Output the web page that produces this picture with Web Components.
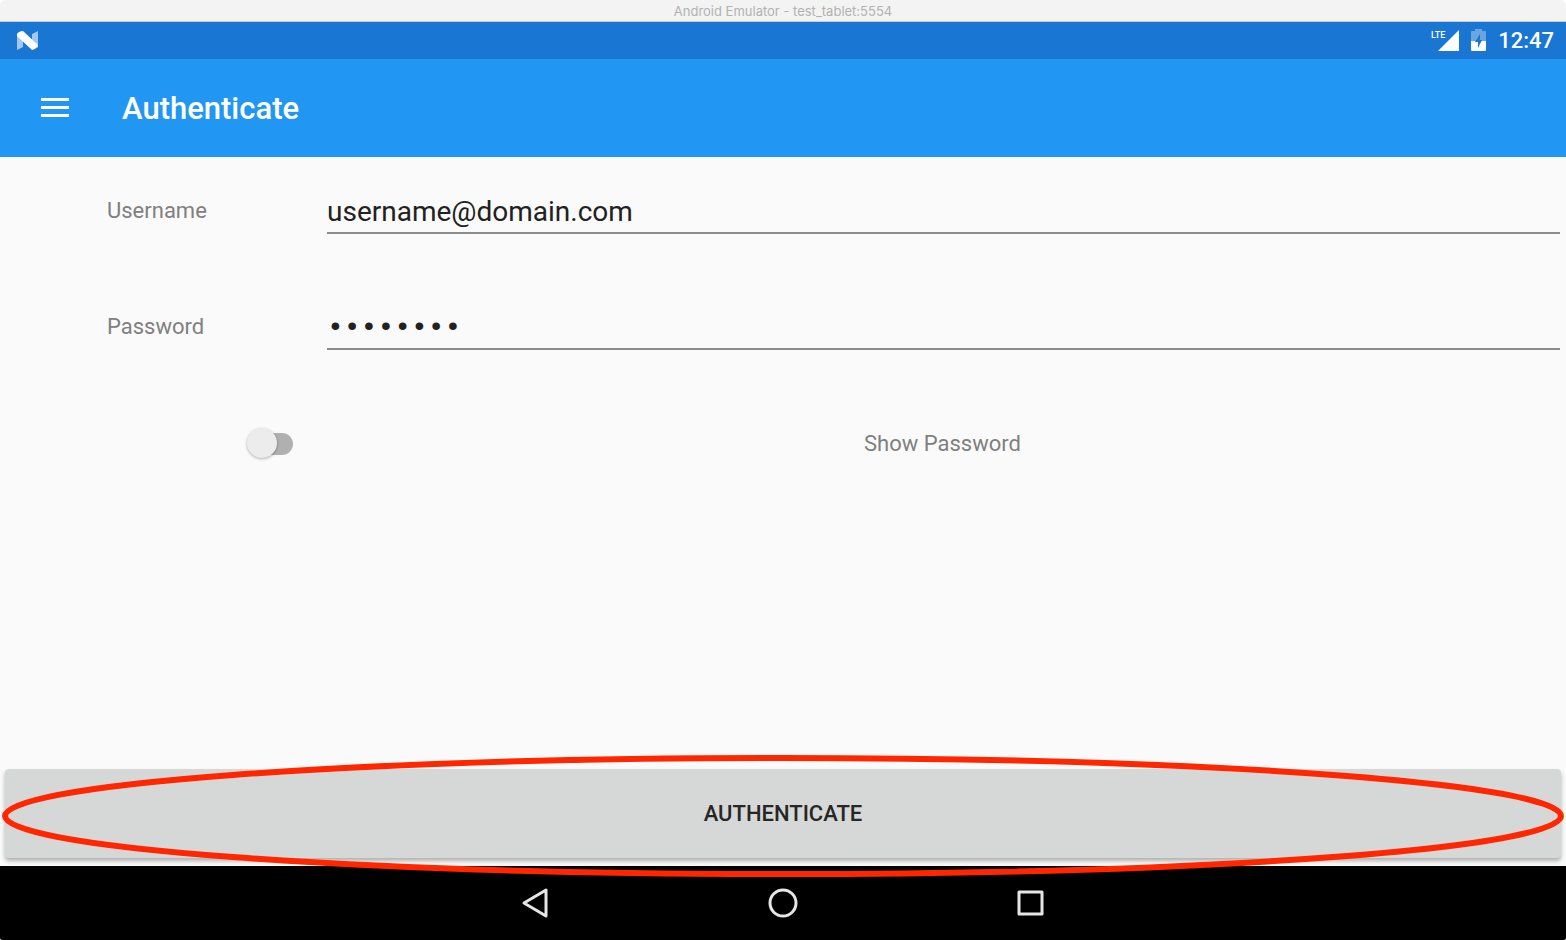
<!DOCTYPE html>
<html lang="en">
<head>
<meta charset="utf-8">
<title>Android Emulator - test_tablet:5554</title>
<style>
html, body { margin: 0; background: #fff; }
body { font-family: Roboto, sans-serif; }
</style>
</head>
<body>
<emulator-window>
  <window-title slot="chrome">Android Emulator - test_tablet:5554</window-title>
  <status-bar slot="chrome">12:47</status-bar>
  <app-toolbar slot="chrome">Authenticate</app-toolbar>
  <text-field label="Username" type="text" value="username@domain.com"></text-field>
  <text-field label="Password" type="password" value="password"></text-field>
  <switch-row>Show Password</switch-row>
  <action-button slot="action">AUTHENTICATE</action-button>
  <system-nav slot="nav"></system-nav>
</emulator-window>

<script>
function define(name, html, setup) {
  const template = document.createElement('template');
  template.innerHTML = html;
  customElements.define(name, class extends HTMLElement {
    constructor() {
      super();
      this.attachShadow({ mode: 'open' }).append(template.content.cloneNode(true));
    }
    connectedCallback() {
      if (setup) setup(this, this.shadowRoot);
    }
  });
}

define('emulator-window', `
<style>
:host { display: flex; flex-direction: column; min-height: 100vh; border-radius: 6px 6px 2px 2px; overflow: hidden; background: #fafafa; }
main { flex: 1; display: flex; flex-direction: column; gap: 8px; }
</style>
<slot name="chrome"></slot>
<main><slot></slot></main>
<slot name="action"></slot>
<slot name="nav"></slot>`);

define('window-title', `
<style>
:host { display: block; box-sizing: border-box; height: 22px; border-bottom: 1px solid #cbcbcb; background: #f3f3f3; color: #b2b2b2; font: 13px/22px Inter, sans-serif; text-align: center; }
</style>
<slot></slot>`);

define('status-bar', `
<style>
:host { display: flex; align-items: center; box-sizing: border-box; height: 37px; padding: 0 12px 0 16px; background: #1976d2; color: #fff; }
.end { display: flex; align-items: center; gap: 12px; margin-left: auto; }
svg { display: block; }
.lte { font: 500 9px Roboto, sans-serif; }
.time { font-size: 22px; line-height: 36px; font-weight: 500; }
</style>
<svg width="23" height="20" viewBox="0 0 23 20" fill="#fff" aria-label="Android N">
  <path opacity=".6" d="M1 2 7 8V16L1 19ZM22 0V17L16 12V3Z"/>
  <path d="M1 3Q3 0 7 0L22 14Q21 18 16 19L1 5Z"/>
</svg>
<div class="end">
  <svg width="28" height="24" viewBox="0 0 28 24" fill="#fff">
    <path d="M28 1V22H7Z"/>
    <text class="lte" x="0" y="9">LTE</text>
  </svg>
  <svg width="15" height="24" viewBox="0 0 15 24">
    <path fill="#fff" opacity=".35" d="M0 3Q0 2 1 2H4V0H11V2H14Q15 2 15 3V12H0Z"/>
    <path fill="#fff" d="M0 12H15V21Q15 22 14 22H1Q0 22 0 21Z"/>
    <path fill="#1976d2" d="M9 5 4 13H7V19L11 11H9Z"/>
  </svg>
  <span class="time"><slot></slot></span>
</div>`);

define('app-toolbar', `
<style>
:host { display: flex; align-items: center; gap: 48px; height: 98px; padding: 0 36px; background: #2196f3; color: #fff; }
button { border: 0; margin: 0; padding: 5px; background: none; color: inherit; }
svg { display: block; }
h1 { margin: 0; padding-top: 2px; font-size: 31px; line-height: 36px; font-weight: 500; }
</style>
<button type="button" aria-label="Open menu">
  <svg width="28" height="20" viewBox="0 0 28 20" fill="#fff"><path d="M0 0H28V3H0ZM0 8H28V11H0ZM0 16H28V19H0Z"/></svg>
</button>
<h1><slot></slot></h1>`);

define('text-field', `
<style>
:host { display: grid; grid-template-columns: 220px 1fr; align-items: center; height: 108px; padding: 0 6px 0 107px; }
label { color: #808080; font-size: 22px; line-height: 28px; }
input { box-sizing: border-box; width: 100%; height: 46px; margin: 0; padding: 2px 0 0; border: 0; border-bottom: 2px solid #8c8c8c; border-radius: 0; outline: 0; background: none; color: #212121; font: 28px/36px Roboto, sans-serif; }
input[type="password"] { font-family: "Liberation Mono", monospace; }
</style>
<label for="field"></label>
<input id="field">`, (host, root) => {
  root.querySelector('label').textContent = host.getAttribute('label');
  const input = root.querySelector('input');
  input.type = host.getAttribute('type');
  input.value = host.getAttribute('value');
});

define('switch-row', `
<style>
:host { display: grid; grid-template-columns: 72px 1fr; align-items: center; height: 110px; padding-left: 247px; }
input { appearance: none; position: relative; width: 46px; height: 22px; margin: 0; border-radius: 11px; background: linear-gradient(90deg, transparent 15px, #b0b0b0 15px); }
input::before { content: ""; position: absolute; left: 0; top: -5px; width: 30px; height: 30px; border-radius: 50%; background: #ececec; box-shadow: 0 1px 3px rgba(0, 0, 0, .3); }
input:checked::before { left: 16px; }
label { justify-self: center; color: #808080; font-size: 22px; line-height: 28px; }
</style>
<input type="checkbox" role="switch" id="toggle">
<label for="toggle"><slot></slot></label>`, (host, root) => {
  root.querySelector('input').addEventListener('change', (event) => {
    const field = host.parentElement.querySelector('text-field[label="Password"]');
    field.shadowRoot.querySelector('input').type = event.target.checked ? 'text' : 'password';
  });
});

define('action-button', `
<style>
:host { display: block; position: relative; z-index: 1; padding: 0 5px 8px; }
button { display: block; width: 100%; height: 89px; margin: 0; padding: 0; border: 0; border-radius: 4px; background: #d6d8d7; color: #262626; box-shadow: 0 3px 4px rgba(0, 0, 0, .3); font: 500 22px/28px Roboto, sans-serif; }
.ring { position: absolute; left: 5px; top: -11px; width: calc(100% - 10px); height: 116px; overflow: visible; pointer-events: none; }
</style>
<button type="button"><slot></slot></button>
<svg class="ring" aria-hidden="true"><ellipse cx="50%" cy="50%" rx="50%" ry="50%" fill="none" stroke="#ff2600" stroke-width="6"/></svg>`);

define('system-nav', `
<style>
:host { display: flex; justify-content: center; align-items: center; gap: 216px; height: 74px; background: #000; }
button { border: 0; margin: 0; padding: 0; background: none; }
svg { display: block; fill: none; stroke: #e6e6e6; stroke-width: 3; stroke-linejoin: round; }
</style>
<button type="button" aria-label="Back"><svg width="32" height="32" viewBox="0 0 32 32"><path d="M27 3V29L5 16Z"/></svg></button>
<button type="button" aria-label="Home"><svg width="32" height="32" viewBox="0 0 32 32"><circle cx="16" cy="16" r="13"/></svg></button>
<button type="button" aria-label="Overview"><svg width="32" height="32" viewBox="0 0 32 32"><path d="M4 5H27V27H4Z"/></svg></button>`);
</script>
</body>
</html>
